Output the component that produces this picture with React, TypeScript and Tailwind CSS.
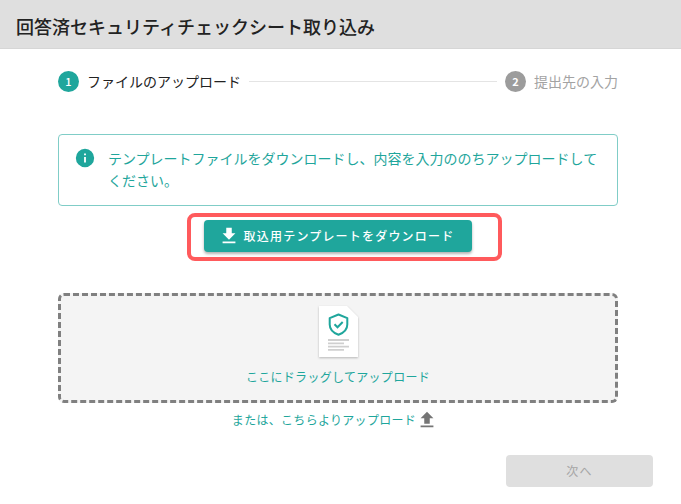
import React from "react";

type Step = {
  id: number;
  label: string;
  active: boolean;
};

const steps: Step[] = [
  { id: 1, label: "ファイルのアップロード", active: true },
  { id: 2, label: "提出先の入力", active: false },
];

interface IconProps {
  path: string;
  className?: string;
}

const Icon: React.FC<IconProps> = ({ path, className }) => (
  <svg viewBox="0 0 24 24" fill="currentColor" className={className} aria-hidden="true">
    <path d={path} />
  </svg>
);

const infoPath =
  "M13 9h-2V7h2m0 10h-2v-6h2m-1-9A10 10 0 0 0 2 12a10 10 0 0 0 10 10 10 10 0 0 0 10-10A10 10 0 0 0 12 2z";
const downloadPath = "M5 20h14v-2H5m14-9h-4V3H9v6H5l7 7 7-7z";
const uploadPath = "M9 16v-6H5l7-7 7 7h-4v6H9m-4 4v-2h14v2H5z";

const Stepper: React.FC = () => (
  <ol className="flex items-center px-[42px] h-16">
    {steps.map((step, idx) => (
      <React.Fragment key={step.id}>
        {idx > 0 && <li className="flex-1 h-px mx-2 bg-[#e4e4e4]" aria-hidden="true" />}
        <li className="flex items-center gap-2">
          <span
            className={
              step.active
                ? "flex items-center justify-center size-[21px] rounded-full bg-[#1fa69c] text-white text-[11px] leading-none font-medium"
                : "flex items-center justify-center size-[21px] rounded-full bg-[#9c9c9c] text-white text-[11px] leading-none font-bold"
            }
          >
            {step.id}
          </span>
          <span className={step.active ? "text-sm text-[#222222]" : "text-sm text-[#a3a3a3]"}>
            {step.label}
          </span>
        </li>
      </React.Fragment>
    ))}
  </ol>
);

const DocumentIcon: React.FC = () => (
  <svg width="42" height="56" viewBox="0 0 42 56" className="drop-shadow-[0_1px_1px_rgba(0,0,0,0.25)]" aria-hidden="true">
    <path d="M2 2h28l11 11v40H2z" fill="#ffffff" />
    <path
      d="M21.500 10.500l8.800 3.600v6.400c0 4.600-3.600 8.400-8.800 10.300-5.200-1.900-8.800-5.700-8.800-10.300v-6.400z"
      fill="none"
      stroke="#1fa69c"
      strokeWidth="2"
      strokeLinejoin="round"
    />
    <path d="M17.500 20.300l3 3 5.200-5.300" fill="none" stroke="#1fa69c" strokeWidth="2" />
    <path d="M11 36h21M11 39.300h16M11 42.600h21M11 45.900h16" stroke="#cfcfcf" strokeWidth="1.800" />
  </svg>
);

const App: React.FC = () => {
  return (
    <div className="bg-white font-['Noto_Sans_CJK_JP',sans-serif] text-[#1fa69c]">
      <header className="flex items-center h-[49px] px-4 pt-1 bg-[#dfdfdf] border-b border-[#d6d6d6]">
        <h1 className="text-lg font-medium text-[#222222]">回答済セキュリティチェックシート取り込み</h1>
      </header>

      <main className="pl-4 pr-[21px]">
        <Stepper />

        <section className="pt-[21px]">
          <div className="px-[42px]">
            <div className="flex gap-3 pt-3 pb-[14px] pl-[15px] pr-3 rounded border border-[#80cdc7]">
              <Icon path={infoPath} className="size-[22px] shrink-0" />
              <p className="flex-1 text-sm leading-[22px]">
                テンプレートファイルをダウンロードし、内容を入力ののちアップロードしてください。
              </p>
            </div>

            <div className="flex justify-center mt-[14px]">
              <div className="relative">
                <button
                  type="button"
                  className="flex items-center gap-1 h-8 pl-[14px] pr-[18px] rounded bg-[#1fa69c] text-white text-xs font-medium tracking-widest shadow-[0_2px_3px_rgba(0,0,0,0.3)]"
                >
                  <Icon path={downloadPath} className="size-[22px]" />
                  取込用テンプレートをダウンロード
                </button>
                <span className="absolute -top-[7px] -bottom-[9px] -left-[17px] -right-[30px] rounded-lg border-4 border-[#ff5a5c] pointer-events-none" />
              </div>
            </div>

            <div className="flex flex-col items-center mt-[41px] pt-2 pb-[13px] rounded-md border-3 border-dashed border-[#808080] bg-[#f4f4f4]">
              <DocumentIcon />
              <p className="mt-[7px] text-xs leading-5 tracking-wide">ここにドラッグしてアップロード</p>
            </div>

            <div className="flex justify-center mt-[6px]">
              <label
                htmlFor="sheet-file"
                className="flex items-center pr-1.5 text-xs tracking-wide cursor-pointer"
              >
                または、こちらよりアップロード
                <Icon path={uploadPath} className="size-[22px] text-[#757575]" />
              </label>
              <input id="sheet-file" type="file" className="sr-only" />
            </div>
          </div>

          <div className="flex justify-end mt-6 pr-[7px] pb-4">
            <button
              type="button"
              disabled
              className="w-[147px] h-8 rounded bg-[#dfdfdf] text-[#a6a6a6] text-xs tracking-widest"
            >
              次へ
            </button>
          </div>
        </section>
      </main>
    </div>
  );
};

export default App;
